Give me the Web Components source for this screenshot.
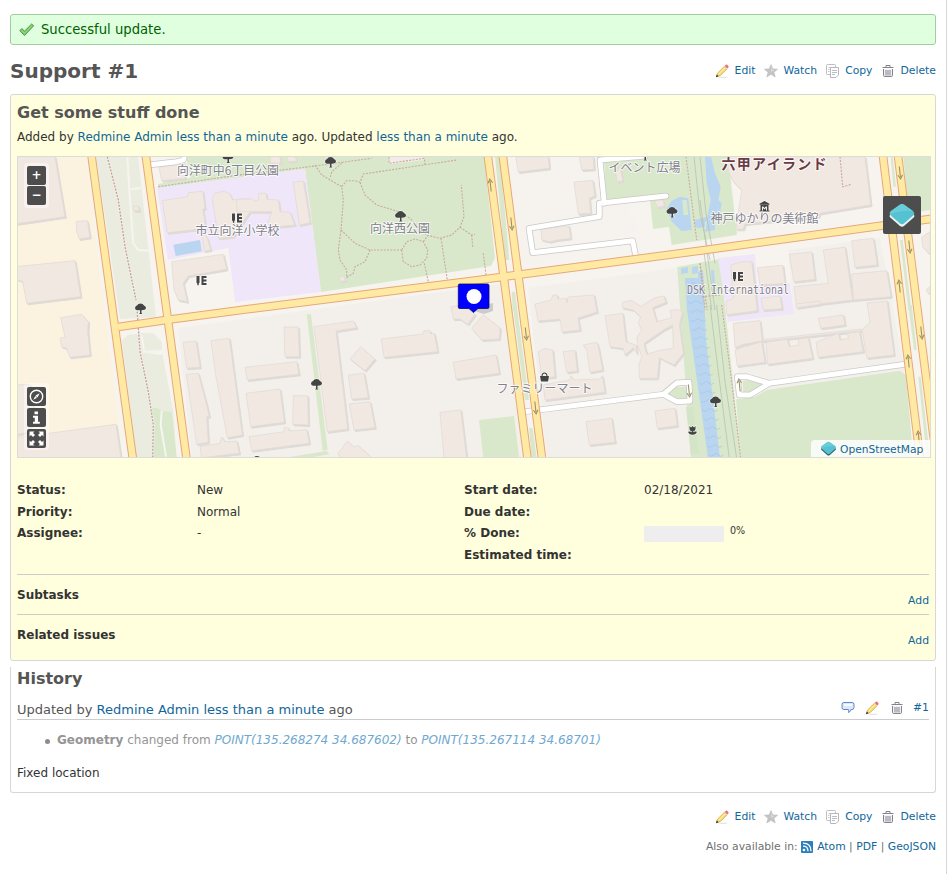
<!DOCTYPE html>
<html lang="en">
<head>
<meta charset="utf-8">
<title>Support #1</title>
<style>
html,body{margin:0;padding:0}
body{background:#fff;color:#333;font:12px/16px "DejaVu Sans","Noto Sans CJK JP",sans-serif;height:874px;overflow:hidden}
</style>
</head>
<body>
<issue-page></issue-page>
<script>
const define=(name,css,html)=>customElements.define(name,class extends HTMLElement{
  constructor(){super();this.attachShadow({mode:'open'}).innerHTML='<style>'+css+'</style>'+(typeof html==='function'?html(this):html);}
});
const LINK='a{color:#169;text-decoration:none}';

/* ---------- icons ---------- */
const ICONS={
 edit:'<g transform="translate(.6 .4) scale(.92)"><path d="M6 14.5h9l-3 1.300H5z" fill="#e4e4e4"/><path d="M2 14.600l1.200-4L10.600 3.200l2.800 2.800L6 13.400z" fill="#f8dd74" stroke="#c79a2c" stroke-width=".7"/><path d="M4.400 11.600L11.800 4.400" stroke="#fff3b8" stroke-width="1"/><path d="M10.600 3.200l1.700-1.700q.7-.5 1.400.1l1.200 1.200q.6.7.1 1.400L13.400 6z" fill="#ee6f6f"/><path d="M10.300 3.500l2.800 2.800.8-.8-2.800-2.800z" fill="#d9dce6"/><path d="M1.400 15l1-3 2 2z" fill="#333"/></g>',
 star:'<path d="M8 1.600l1.800 4.300 4.800.3-3.700 3 1.300 4.700L8 11.300l-4.200 2.600 1.300-4.700-3.700-3 4.800-.3z" fill="#c4c4c4" stroke="#b8b8b8" stroke-width=".6"/><path d="M8 3l1.200 3.500 3 .4L8 9z" fill="#d8d8d8"/>',
 copy:'<rect x="1.500" y="1.500" width="9" height="10" rx="1" fill="#fff" stroke="#bdbdc2"/><path d="M3.500 4.500h5M3 6.500h1.500M3 8.500h1.500" stroke="#c6c6cc"/><path d="M5.500 4.500h8v7.500l-2.500 2.500H5.500z" fill="#fff" stroke="#b6b6be"/><path d="M7 7.500h5M7 9.500h5M7 11.500h3" stroke="#bcbcc4"/>',
 trash:'<path d="M2.500 4.500h11M6 4V2.500h4V4" fill="none" stroke="#85828f"/><path d="M3.500 6v6.200q0 1.300 1.300 1.300h6.400q1.300 0 1.300-1.300V6" fill="#f2f2f5" stroke="#85828f"/><path d="M6 7v5.500M8 7v5.500M10 7v5.500" stroke="#85828f"/>',
 comment:'<path d="M4 2.500h8q2 0 2 2v3q0 2-2 2h-1q0 1.800-2.500 3 .6-1.600 0-3H4q-2 0-2-2v-3q0-2 2-2z" fill="#dbe9fb" stroke="#5e8ac4"/><path d="M4 4h8v2H4z" fill="#f5faff"/>',
 check:'<path d="M.8 8.600l2-2.100 2.700 2.600L12.700 2l2 1.700-9.200 9.900z" fill="#7cc864" stroke="#459543" stroke-width=".9"/><path d="M2.500 8.300l3 2.900 7.600-7.600" fill="none" stroke="#a4df90" stroke-width=".8"/>',
 feed:'<rect x="2" y="2" width="12" height="12" rx="1" fill="#2b7fbd"/><circle cx="5" cy="11" r="1.300" fill="#fff"/><path d="M4 7.200q5 0 5 5M4 4.200q8 0 8 8" fill="none" stroke="#fff" stroke-width="1.300"/>'
};
define('app-icon',':host{display:block;width:16px;height:16px;flex:none}svg{display:block}',
 el=>`<svg width="16" height="16" viewBox="0 0 16 16">${ICONS[el.getAttribute('name')]}</svg>`);

define('icon-link',':host{display:flex;align-items:center;gap:4.5px}'+LINK,
 el=>`<app-icon name="${el.getAttribute('icon')}"></app-icon><a href="#"><slot></slot></a>`);

define('issue-actions',':host{display:flex;justify-content:flex-end;gap:7.500px;font-size:10.8px;height:16px;line-height:16px}',
 '<icon-link icon="edit">Edit</icon-link><icon-link icon="star">Watch</icon-link><icon-link icon="copy">Copy</icon-link><icon-link icon="trash">Delete</icon-link>');

define('flash-notice',':host{display:flex;align-items:center;gap:6px;height:31px;box-sizing:border-box;border:1px solid #9fcf9f;border-radius:3px;background:#dfffdf;color:#005f00;font-size:13.2px;padding-left:8px}',
 '<app-icon name="check"></app-icon><span><slot></slot></span>');

/* ---------- attributes ---------- */
define('issue-attribute',':host{display:grid;grid-template-columns:180px 1fr;height:21.6px;line-height:21px}b{font-weight:bold}',
 el=>`<b>${el.getAttribute('label')}:</b><span><slot></slot></span>`);
define('done-ratio',':host{display:flex;gap:6px;padding-top:3px}i{display:block;width:80px;height:16px;background:#eee}span{font-size:9.6px;line-height:10px}',
 '<i></i><span>0%</span>');
define('issue-relation',':host{display:flex;justify-content:space-between;border-top:1px solid #cbcbcb;height:39px;line-height:41px}b{font-weight:bold}a{font-size:10.8px;line-height:52px}'+LINK,
 '<b><slot></slot></b><a href="#">Add</a>');

/* ---------- map ---------- */
/* Polygons are kept per sheet, in thirds of a pixel from the sheet's corner. */
const SHEETS={A:[10,150],D:[240,150],E:[470,150],F:[700,150],G:[10,305],H:[240,305],I:[470,305],J:[700,305],P:null};
const pts=(s,str)=>{const o=SHEETS[s];return str.trim().split(/\s+/).map(p=>{const[x,y]=p.split(',').map(Number);
  return o?(o[0]+x/3).toFixed(1)+','+(o[1]+y/3).toFixed(1):x+','+y;}).join(' ');};
const BUILDINGS={
A:['15,20 135,20 165,200 15,222','199,214 232,212 240,262 208,267 200,245','15,350 195,332 212,440 50,460 38,395 15,385','447,52 525,40 525,85 455,92','457,152 533,140 535,128 578,124 585,175 578,178 588,235 472,248','607,145 615,130 640,124 658,130 668,150 720,145 720,185 670,260 625,265','575,240 592,265 602,300 583,303','485,335 640,313 650,358 535,378 520,400 532,455 505,450 492,420','370,168 385,168 388,182 372,182'],
D:['-10,148 38,147 42,153 56,150 56,130 78,130 80,148 115,150 120,185 150,187 165,225 90,232 85,215 95,185 -10,185','160,97 190,93 210,218 178,225','90,20 120,20 122,40 92,40','142,20 165,20 170,33 145,35','298,380 310,380 318,392 302,394'],
E:['137,20 235,20 238,55 145,66','328,20 370,20 372,58 335,60','312,96 368,91 375,138 358,145 362,190 325,192','213,238 297,228 302,265 260,270 240,275 215,270','437,70 450,50 458,92 442,95','555,152 580,150 582,168 562,172'],
F:['85,20 495,20 512,165 360,190 355,200 135,222 130,238 108,238 125,120 100,95 85,65','268,313 335,306 345,388 282,395','370,300 435,292 458,450 290,470 282,410 385,400','455,272 520,265 532,345 465,352','455,372 560,362 573,440 460,450','172,353 248,346 255,400 180,405','92,345 125,335 155,335 172,482 80,494 78,455 100,445','183,445 240,438 246,476 190,480','665,262 690,245 690,315 682,305 668,290','678,420 690,410 690,435'],
G:['152,38 215,28 235,50 233,80 240,150 180,157 170,130 155,125 150,100 165,97','20,398 318,358 333,460 20,460','15,240 60,238 70,300 60,380 15,390','519,112 558,108 570,187 530,190','529,208 565,205 590,300 598,335 590,335 595,412 560,418','603,107 658,100 697,390 652,398 618,215','570,425 630,415 635,395 645,410 680,408 688,445 575,458'],
H:['132,66 175,66 178,155 135,155','15,187 170,170 177,208 22,225','18,265 120,252 133,352 32,365','160,272 203,272 205,360 158,358','27,395 133,380 133,368 145,368 148,378 200,374 208,415 35,437','222,65 340,48 350,68 288,78 323,372 262,380','362,125 405,162 375,197 330,162','325,210 372,205 385,278 335,282','328,297 390,290 405,368 342,375','424,102 550,87 552,77 570,77 572,87 583,85 593,140 432,157','633,5 665,0 705,28 683,58 660,42 640,42','600,322 662,315 680,460 612,460','295,445 322,408 340,425 355,422 398,460 300,460'],
I:['405,32 458,25 468,110 498,120 500,145 490,128 465,150 460,130 420,125','5,70 40,30 90,68 88,102 35,105','-50,172 78,150 88,205 -42,222','205,140 225,130 248,135 255,215 215,220','280,140 315,136 322,198 290,202','340,120 380,112 385,125 398,195 360,202 350,135','220,240 300,225 302,212 312,225 390,222 397,212 405,262 225,285','348,350 425,340 435,412 358,420','555,318 615,310 622,362 562,370'],
J:['355,40 430,30 435,60 362,70','100,55 180,47 187,108 130,118 105,128','105,135 185,110 195,172 112,183','187,104 485,72 487,77 188,109','198,112 262,103 268,125 297,120 295,103 325,98 338,160 203,178','348,112 415,85 420,105 445,100 443,85 478,80 490,140 355,157','287,-3 360,-12 362,-2 290,8'],
P:['535,304 551,300 553,295 557,295 558,299 566,298 567,303 568,297 594,295 597,312 578,318 580,330 562,332 560,319 538,321','867,303 887,301 894,355 867,358 862,330 870,322']};
const poly=(s,p,fill)=>`<polygon points="${pts(s,p)}" fill="${fill}"/>`;
const line=(s,p,attrs='')=>`<polyline points="${pts(s,p)}" ${attrs}/>`;
/* The building with an inner court is one ring with a hole. */
const ring=['457,-8 485,-14 512,4 555,-22 582,-27 588,-8 548,8 560,50 605,38 600,16 625,14 637,20 628,60 640,145 612,180 568,158 562,220 508,220 507,180 515,155 503,120 500,98 515,75 505,55 512,35 490,15 457,8','522,115 580,75 608,60 610,130 570,136 530,148'].map(p=>'M'+pts('I',p).replace(/ /g,'L')+'Z').join('');
const buildings=Object.entries(BUILDINGS).map(([s,l])=>l.map(p=>`<polygon points="${pts(s,p)}"/>`).join('')).join('')+`<path fill-rule="evenodd" d="${ring}"/>`;
const G='#d9e8cb',W='#b9d5f0',L='#efe6f9',O='#f7f4f0';
const areas=[
 ['P','178,328 500,284 524,458 192,458','#f3f0ec'],['P','528,288 676,268 700,458 547,458','#f3f0ec'],['P','788,250 880,238 905,372 740,395 736,322 794,314','#f3f0ec'],['P','500,156 600,156 640,230 520,270','#f6f3ef'],
 ['P','17,156 86,156 123,458 17,458','#fbf3e0'],
 ['P','96,156 138,156 156,317 120,319','#e9ecdf'],
 ['G','335,105 355,90 395,84 430,85 455,110 457,138 410,145 458,150 490,320 500,460 380,460','#e9ecdf'],['G','425,310 440,308 455,318 485,320 500,460 430,460',G],
 ['P','186,156 484,156 495,258 491,266 321,292 305,169 158,188 158,184 190,178',G],
 ['P','157,188 305,169 321,292 235,302 228,248 168,260',L],['A','490,284 570,270 575,304 497,318',W],
 ['A','488,330 655,295 675,458 530,475',O],['D','445,20 550,20 555,30 447,42','#f3ebe7'],
 ['E','75,20 90,20 118,330 105,330',G],['E','125,425 135,425 142,482 128,482',G],['I','128,0 140,0 177,285 165,285',G],['I','177,370 188,370 200,460 185,460',G],
 ['I','27,345 132,333 148,460 40,460',G],
 ['P','606,200 604,156 728,156 737,235 671.7,245 669,227 653,229 650,200',G],
 ['E','590,175 605,152 630,140 655,145 665,240 635,243 605,215 595,190',W],['E','637,150 650,150 655,195 640,195',G],['E','675,210 705,205 705,230 680,235',W],
 ['F','15,20 33,20 45,70 62,110 55,150 65,160 60,190 45,205 45,240 15,245 22,210 0,235 -15,225 -15,210 22,200 32,150 20,100',W],
 ['P','677,267 720,259 741,458 691,458',G],
 ['P','685,278 698,278 698,272 703,270 706,340 720,458 708,458 687,310',W],['P','681,268 688,267 688,273 681,274',W],['P','692,267 698,266 698,273 692,274',W],['P','711,270 714,270 715,283 712,283',W],
 ['I','648,305 668,305 688,445 662,448','#d3e5c6'],
 ['P','718,258 755,254 757,285 790,283 794,314 728,322',L],
 ['F','610,20 690,20 690,180 625,190',G],['F','572,20 578,20 588,110 580,110',G],['F','600,270 608,270 634,480 625,480',G],['J','625,0 635,0 650,135 642,135',G],['J','655,215 662,215 690,455 680,455',G],
 ['J','200,255 600,197 618,210 640,460 122,460 108,283 165,275',G],
 ['H','200,28 213,28 263,435 248,438',G],['H','125,460 260,438 268,448 200,460',G],
 ['I','590,268 620,245 655,245 655,280 620,282',G],['J','128,228 140,226 190,238 150,262 130,262',G]
].map(a=>poly(...a)).join('');
const softPaths=[['A','352,20 360,150 370,280 385,300 425,303'],['A','362,118 392,114'],['G','395,90 402,140 457,138'],['G','455,318 452,360 468,455']].map(a=>line(...a)).join('');
const dotted=[
 ['A','445,110 705,72'],
 ['D','0,75 225,48 395,25'],['D','225,45 245,75 305,110 310,150 303,240 295,300 300,330 320,360 320,385'],['D','305,40 275,65 270,85'],['D','305,110 320,92 345,92 360,97 370,72 650,30'],
 ['D','360,97 375,135 410,165 470,183 510,205 560,255 600,265 635,255 660,232 672,200 664,105'],['D','303,240 345,280 390,300 485,300'],['D','390,300 375,335 345,350 340,370 320,382'],
 ['D','485,300 500,275 525,267 550,275 563,300 560,325 540,345 515,350 490,335 485,300'],['D','550,275 565,255'],['D','553,340 565,395'],['D','603,265 622,390'],['D','660,232 695,255 705,253'],['D','695,255 698,290'],['D','447,22 447,40 553,25 555,45'],
 ['E','40,310 48,375'],['E','648,20 680,270'],['E','690,340 705,480'],['J','65,0 95,230 122,460'],['F','420,20 428,110 455,103'],['F','0,340 22,480'],['F','5,440 60,435']
].map(a=>line(...a)).join('');
const promenade=line('A','292,20 325,150 345,290 378,450')+line('G','380,0 390,140 415,260 430,360 428,460');
const rails=[['E','672,20 690,190 720,330'],['E','690,20 708,190 735,340'],['F','0,150 20,300 45,480'],['F','10,290 35,480'],['J','30,0 55,200 88,460'],['J','50,0 75,230 110,460']].map(a=>line(...a)).join('');
const lanes=[['E','525,18 390,30 403,160'],['E','588,138 388,160 388,200 177,235 188,308 488,272 497,318'],['A','415,45 500,35 520,30 524,18'],['I','165,320 580,268 620,234 657,232 660,288 620,290 580,268'],['J','620,177 208,235 140,215 112,215 118,270 150,270 208,235']].map(a=>line(...a)).join('');
const roads=['91,152 133.3,462','145.3,152 187,462','118,327 168,319.8 245,309.5 475,280.5 705,250 934,218.5','487.3,152 528,462','502.3,152 542.5,462','882.5,152 920.5,462','897.5,152 934,440'].map(a=>line('P',a)).join('');
const arrow=([x,y,d])=>`<path transform="translate(${x} ${y}) rotate(${d?-6:174})" d="M0 6.500V-4M-2.300-2L0-6 2.300-2" />`;
const arrows=[[490.5,185,1],[511.5,224,0],[526,334,0],[535.5,408,0],[900,173,0],[909.5,247,0],[899.5,286,1],[908.5,361,1],[921.5,333,0],[918.7,437,1],[739.5,385,1],[689,391,0]].map(arrow).join('');
const trees=[[228,157.5],[330.5,162],[400.5,216],[672,212],[140.5,308.5],[316.5,384],[715.5,401.5],[645,155],[257,461]].map(([x,y])=>`<path transform="translate(${x} ${y})" d="M-5.500-.500q0-2 2-2.500 1-2 3.500-2 2.600 0 3.500 2 2 .600 2 2.500-.300 2-2.500 2L1 1.700V4.500l1 1h-3.500l1-1V1.700l-3 0Q-5.500 1.300-5.500-.500z"/>`).join('');
const schools=[[237,218],[201.5,280.5],[738,276.5]].map(([x,y])=>`<path transform="translate(${x} ${y})" d="M-5-4.500h3V2.300l-1.500 1.700L-5 2.300zM-4.200 3.500h1.500v1.300h-1.500zM0-4.500h5v2H2v1.500h3V1H2v1.500h3v2H0z"/>`).join('');
const labels=[[228,174.8,'向洋町中6丁目公園',102],[237.5,235,'市立向洋小学校',84],[400,232.9,'向洋西公園',60],[644.5,172.3,'イベント広場',72],[764.5,222.7,'神戸ゆかりの美術館',108],[544.5,392.8,'ファミリーマート',96]].map(([x,y,t,w])=>`<text x="${x}" y="${y}" textLength="${w}" lengthAdjust="spacingAndGlyphs">${t}</text>`).join('');
const SHAPE='M1.500-2.500L10.300-8.800q2.200-1.500 4.400 0L23.500-2.500q2.200 2 .700 4L14.800 9.800q-2.300 2-4.600 0L.800 1.500q-1.500-2 .700-4z';
const GEM=`<path d="${SHAPE}" transform="translate(0 2.500)" fill="var(--rim)"/><path d="${SHAPE}" fill="#55c2d2"/><path d="M1.500-2.500L10.300-8.800q2.200-1.500 4.400 0L23.300-2.600Q11-3.500 .500 1q-1-2 1-3.500z" fill="#6accd9"/>`;

define('map-button',':host{display:flex;align-items:center;justify-content:center;width:19px;height:19px;background:#4d4d4d;border-radius:2px;color:#fff;font:bold 12px/19px "DejaVu Sans",sans-serif}svg{display:block}',
 el=>({plus:'<span>+</span>',minus:'<span>−</span>',
  compass:'<svg width="19" height="19" viewBox="0 0 19 19"><circle cx="9.500" cy="9.500" r="6.200" fill="none" stroke="#fff" stroke-width="1.400"/><path d="M12.700 6.300L10.500 10.500 8.500 8.500zM6.300 12.700L8.300 9 10 10.800z" fill="#fff"/></svg>',
  info:'<svg width="19" height="19" viewBox="0 0 19 19"><path d="M7.500 3.500h3.500v2.800H7.500zM6 7.800h5v6h1.800v2H6v-2h1.800v-4H6z" fill="#fff"/></svg>',
  full:'<svg width="19" height="19" viewBox="0 0 19 19"><path d="M2.500 2.500h5L6 4l2 2-2 2-2-2-1.500 1.500zM16.500 2.500v5L15 6l-2 2-2-2 2-2-1.500-1.500zM2.500 16.500v-5L4 13l2-2 2 2-2 2 1.500 1.500zM16.500 16.500h-5L13 15l-2-2 2-2 2 2 1.500-1.500z" fill="#fff"/></svg>'})[el.getAttribute('kind')]);

define('issue-map',`:host{display:block;position:relative;width:914px;height:302px;overflow:hidden;box-sizing:border-box}
.art{display:block}.group{position:absolute;left:7px;display:grid;gap:1px;padding:3px;border-radius:4px;background:rgba(255,255,255,.45)}
.zoom{top:7px}.tools{top:227px;gap:2px;padding-top:4px;padding-bottom:2px}
.layers{position:absolute;left:866px;top:40px;width:38px;height:38px;background:#4d4d4d;border-radius:2px}
.credit{position:absolute;right:1px;bottom:1px;width:119px;height:17px;box-sizing:border-box;padding:3px 0 0 10px;display:flex;align-items:center;gap:4px;background:rgba(255,255,255,.8);border-radius:4px 0 0 0;font-size:10.67px;line-height:14px}
.credit svg{margin-top:-3px}
.frame{position:absolute;inset:0;border:1px solid #dcdcd8;pointer-events:none}`+LINK,
`<svg class="art" width="914" height="302" viewBox="17 156 914 302">
<rect x="17" y="156" width="914" height="302" fill="${O}"/>${areas}
<g fill="none" stroke="${O}" stroke-width="2">${softPaths}</g>
<g fill="#dedad6" stroke="#dedad6" transform="translate(1.300 1.500)">${buildings}</g>
<g fill="#f1e8e2" stroke="#e2dad5" stroke-width=".8">${buildings}</g>
<g fill="none" stroke="#a6c8ea" stroke-width=".8">${Array.from({length:20},(_,i)=>{const y=284+i*9,x=686+i*1.18;return `<path d="M${x} ${y}q2.500 3 5 0t5 0 5 0"/>`}).join('')}</g>
<g fill="none" stroke="#c8aaa0" stroke-width="1.100" stroke-dasharray="2 1.300">${dotted}</g>
<g fill="none" stroke="#f4efe9" stroke-width="2.400">${promenade}</g><g fill="none" stroke="#bfa096" stroke-width="1.300" stroke-dasharray="2 1.300">${promenade}</g>
<g fill="none" stroke="#b9c1b2" stroke-width=".8">${rails}</g>
<g fill="none" stroke="#c9c8c5" stroke-width="6.400" stroke-linejoin="round" stroke-linecap="round">${lanes}</g>
<g fill="none" stroke="#fff" stroke-width="4.900" stroke-linejoin="round" stroke-linecap="round">${lanes}</g>
<g fill="none" stroke="#e5a878" stroke-width="8.600">${roads}</g>
<g fill="none" stroke="#ffe9a3" stroke-width="6.600">${roads}</g>
<g fill="none" stroke="#9d9069" stroke-width="1.100">${arrows}</g>
<g fill="#444" stroke="#fff" stroke-opacity=".5" stroke-width="1.500" paint-order="stroke">${trees}${schools}
<path d="M764.500 201l5 2.700v1h-10v-1zM760.500 205h8v5.500h1v1h-10v-1h1zM762 210.500h1v-2.500l1.500 1.500 1.500-1.500v2.500h1v-4h-1.200l-1.300 1.400-1.300-1.400H762z"/>
<path d="M540 376h9l-1 5.500h-7zM541.500 376q0-3.500 3-3.500t3 3.500h-1q0-2.500-2-2.500t-2 2.500z"/>
<path d="M689.500 426l1.500 1.500 1.500-1.500 1.500 1.500 1.500-1.500v3q0 2-2.300 2.300v1q1.500-1.500 3.800-.500-1 3-4.500 3-3.500 0-4.500-3 2.300-1 3.800.500v-1q-2.300-.300-2.300-2.300z"/></g>
<g fill="#82808a" stroke="#fff" stroke-opacity=".75" stroke-width="2" paint-order="stroke" stroke-linejoin="round" text-anchor="middle" style="font:12px 'Noto Sans CJK JP',sans-serif">${labels}
<text x="738" y="293.500" textLength="102" lengthAdjust="spacingAndGlyphs" style="font:12px 'DejaVu Sans Mono','Liberation Mono',monospace">DSK International</text>
<text x="774" y="168.600" textLength="105" fill="#6b3b45" style="font:bold 14px 'Liberation Sans','Noto Sans CJK JP',sans-serif">六甲アイランド</text></g>
<path d="M468 309l16 5 9-3v-8z" fill="#000" opacity=".15"/>
<path d="M459.500 284h28q1.500 0 1.500 1.500v21.500q0 1.500-1.500 1.500h-9.500l-4.500 4-4.500-4h-9.500q-1.200 0-1.200-1.500v-21.500q0-1.500 1.200-1.500z" fill="#00f" stroke="#0a0a70" stroke-width=".8"/><circle cx="474" cy="296.500" r="7.500" fill="#fff"/>
</svg>
<div class="group zoom"><map-button kind="plus"></map-button><map-button kind="minus"></map-button></div>
<div class="group tools"><map-button kind="compass"></map-button><map-button kind="info"></map-button><map-button kind="full"></map-button></div>
<div class="layers"><svg width="38" height="38" viewBox="0 0 38 38" style="--rim:#e8f4f6"><g transform="translate(6.500 17.500)">${GEM}</g></svg></div>
<div class="credit"><svg width="15" height="15" viewBox="0 0 25 25" style="--rim:#38636c"><g transform="translate(0 11)">${GEM}</g></svg><a href="#">OpenStreetMap</a></div>
<div class="frame"></div>`);

/* ---------- issue and history ---------- */
define('issue-card',`:host{display:block;box-sizing:border-box;height:567px;border:1px solid #d7d7d7;border-radius:3px;background:#ffffdd;padding:7px 6px 6px}
h3{margin:0;font-size:16px;line-height:22px;color:#555}.by{margin:0;line-height:16px;padding:5px 0 11px}
.attrs{display:grid;grid-template-columns:447px 1fr;padding-top:22px;height:94px}`+LINK,
`<h3>Get some stuff done</h3><p class="by">Added by <a href="#">Redmine Admin</a> <a href="#">less than a minute</a> ago. Updated <a href="#">less than a minute</a> ago.</p>
<issue-map></issue-map>
<div class="attrs"><div><issue-attribute label="Status">New</issue-attribute><issue-attribute label="Priority">Normal</issue-attribute><issue-attribute label="Assignee">-</issue-attribute></div>
<div><issue-attribute label="Start date">02/18/2021</issue-attribute><issue-attribute label="Due date"></issue-attribute><issue-attribute label="% Done"><done-ratio></done-ratio></issue-attribute><issue-attribute label="Estimated time"></issue-attribute></div></div>
<div><issue-relation>Subtasks</issue-relation><issue-relation>Related issues</issue-relation></div>`);

define('issue-history',`:host{display:block;box-sizing:border-box;height:126px;border:1px solid #d7d7d7;border-top:0;border-radius:0 0 3px 3px;padding:1px 6px 0}
h3{margin:0;font-size:16px;line-height:22px;color:#555}
.head{display:flex;justify-content:space-between;align-items:center;border-bottom:1px solid #ccc;height:20px;margin-top:9px;font-size:13px;color:#555}.head span:first-child{line-height:20px;padding-top:2px}
.acts{display:flex;align-items:center;gap:8.500px;font-size:10.8px;padding-bottom:2px}.acts a{padding-left:0}
ul{margin:12px 0 0;padding:0 0 0 28px;list-style:none;color:#959595;line-height:16px}li{display:flex;align-items:center;gap:7px;white-space:pre}li::before{content:"";width:5px;height:5px;border-radius:50%;background:#8c8c8c;margin-top:2px}em{color:#6fa8cf}p{margin:17px 0 0;line-height:16px}`+LINK,
`<h3>History</h3><div class="head"><span>Updated by <a href="#">Redmine Admin</a> <a href="#">less than a minute</a> ago</span><span class="acts"><app-icon name="comment"></app-icon><app-icon name="edit"></app-icon><app-icon name="trash"></app-icon><a href="#">#1</a></span></div>
<ul><li><span><b>Geometry</b> changed from <em>POINT(135.268274 34.687602)</em> to <em>POINT(135.267114 34.68701)</em></span></li></ul><p>Fixed location</p>`);

define('other-formats',':host{display:flex;justify-content:flex-end;align-items:center;font-size:10.8px;line-height:16px;color:#707070;white-space:pre}app-icon{margin:0 2px 0 -2px}'+LINK,
 '<span>Also available in: </span><app-icon name="feed"></app-icon><a href="#">Atom</a><span> | </span><a href="#">PDF</a><span> | </span><a href="#">GeoJSON</a>');

define('issue-page',`:host{display:block;box-sizing:border-box;width:947px;height:874px;padding:14px 10px 0;border-right:1px solid #d7d7d7}
.title{display:flex;justify-content:space-between;height:30px;margin:11px 0 8px}
h2{margin:0;font-size:20px;line-height:30px;color:#555}.title issue-actions{margin-top:7px}
issue-history{margin-top:6px}.bottom{margin-top:16px}other-formats{margin-top:14px}`,
`<flash-notice>Successful update.</flash-notice>
<div class="title"><h2>Support #1</h2><issue-actions></issue-actions></div>
<issue-card></issue-card><issue-history></issue-history><issue-actions class="bottom"></issue-actions><other-formats></other-formats>`);
</script>
</body>
</html>
